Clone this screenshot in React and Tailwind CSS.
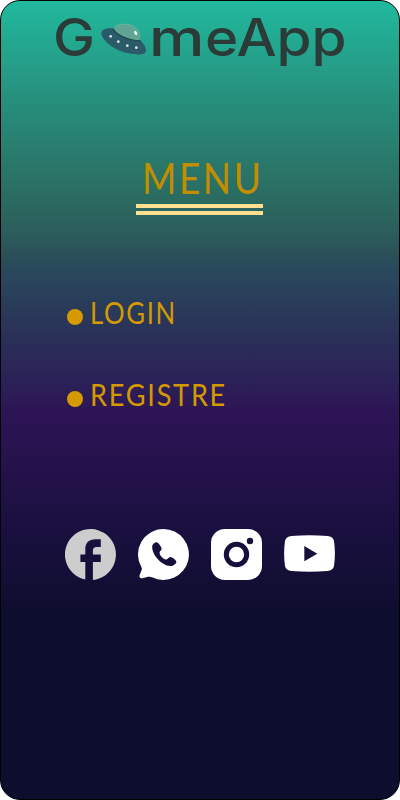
const Ufo = () => (
  <svg className="mt-[22px] ml-[7px] h-8 w-[46px] shrink-0" viewBox="153 66 138 96">
    <path d="M192 82C165 80 153 87 154 98c3 20 36 49 81 59 30 6 52 5 53-8 0-11-8-23-18-32Z" fill="#2b5a69" />
    <path d="M190 84c10 20 47 36 81 35" fill="none" stroke="#1f4b4c" strokeWidth="4" />
    <path d="M191 83c9-13 34-17 54-9 17 6 26 21 25 43-25 1-65-13-79-34Z" fill="#60a593" />
    <path d="M194 78c10-9 32-12 51-4 14 5 23 17 25 32" fill="none" stroke="#8db9a0" strokeWidth="2" />
    <ellipse cx="257" cy="96" rx="4" ry="7" fill="#eefff7" transform="rotate(-25 257 96)" />
    <g fill="#dceae7">
      <circle cx="182" cy="106" r="4" />
      <circle cx="205" cy="122" r="4" />
      <circle cx="232" cy="134" r="4" />
      <circle cx="259" cy="140" r="4" />
    </g>
  </svg>
);

const Facebook = () => (
  <svg className="size-[51px]" viewBox="0 0 51 51">
    <path fill="#cdcdcd" d="M20.300 50.500A25.500 25.500 0 1 1 27.900 50.900V33H35.800V25.400H27.900V21.500Q27.900 17.900 31.500 17.900H35.800V10.200H30.500C24 10.200 20.300 13.800 20.300 20V25.400H15.400V33H20.300Z" />
  </svg>
);

const Whatsapp = () => (
  <svg className="size-[51px]" viewBox="0 0 51 51">
    <path fill="#fff" d="M25.500 0A25.500 25.500 0 1 1 14 48.300Q12 47.300 10 47.800L4.500 49.200C2.200 49.500.9 48 1.700 46L3.600 41Q4.200 39.500 3.500 38.400A25.500 25.500 0 0 1 25.500 0Z" />
    <path fill="#150f3b" d="M14.300 16.500c1-2 3.300-3.800 5-3 1.500.8 4 4.300 4.300 6 .3 1.800-2.300 2.700-2.100 4.500.4 2.700 3 5.400 6 6.500 1.900.7 3-2.800 5-2.500 2 .2 5.500 3 5.800 4.700.3 1.800-3.500 4.600-6 4.400C23.500 36.500 13 25.300 14.300 16.500Z" />
  </svg>
);

const Instagram = () => (
  <svg className="size-[51px]" viewBox="0 0 51 51">
    <rect width="51" height="51" rx="14" fill="#fff" />
    <circle cx="25.500" cy="25.500" r="10.200" fill="none" stroke="#150f3b" strokeWidth="5" />
    <circle cx="39" cy="12" r="3.200" fill="#150f3b" />
  </svg>
);

const Youtube = () => (
  <svg className="size-[51px]" viewBox="0 0 51 51">
    <path fill="#fff" d="M7.500 7Q25.500 5.500 43.500 7Q49 7.300 50 12Q51.800 24.500 50 37Q49 41.700 43.500 42Q25.500 43.500 7.500 42Q2 41.700 1 37Q-.8 24.500 1 12Q2 7.300 7.500 7Z" />
    <path fill="#150f3b" d="M20.300 17v15.300l13-7.600Z" />
  </svg>
);

export default function App() {
  return (
    <main className="h-[800px] w-[400px] overflow-hidden rounded-[20px] border border-black bg-[linear-gradient(180deg,#21b99e_0px,#278f7c_100px,#2b6a60_200px,#2b5e5c_230px,#2b5058_254px,#294a5c_266px,#2a3258_330px,#2b2558_370px,#2d1455_412px,#291350_440px,#1b1041_520px,#150f39_560px,#0d0d2d_615px,#0d0d2d_800px)] font-['Lato',sans-serif]">
      <header className="flex h-[76px] pl-[52px] font-['Inter',sans-serif] text-[52px] leading-[73px] font-medium text-[#2b3b38]">
        <span className="w-[41px] origin-left scale-x-[1.08] whitespace-nowrap">G</span>
        <Ufo />
        <span className="ml-[2px] flex whitespace-nowrap">
          <span className="w-[56px] origin-left scale-x-[1.2]">m</span>
          <span className="origin-left scale-x-[1.09]">eApp</span>
        </span>
      </header>

      <section className="mt-[76px] ml-[135px] w-[127px]">
        <h1 className="h-[51px] origin-left scale-x-[0.86] pl-[7px] text-[43px] leading-[50px] tracking-[3px] whitespace-nowrap text-[#c28e00]">MENU</h1>
        <div className="h-[11px] border-y-4 border-[#ffe090]" />
      </section>

      <nav className="mt-[78px] ml-[66px] text-[31px] leading-[38px] text-[#d49a00]">
        <div className="flex h-[40px] items-center">
          <i className="mt-[7px] size-4 rounded-full bg-[#d49a00]" />
          <span className="mb-[2px] ml-[7px] origin-left scale-x-[0.83] tracking-[2px] whitespace-nowrap">LOGIN</span>
        </div>
        <div className="mt-[42px] flex h-[40px] items-center">
          <i className="mt-[7px] size-4 rounded-full bg-[#d49a00]" />
          <span className="mb-[2px] ml-[7px] origin-left scale-x-[0.875] tracking-[2px] whitespace-nowrap">REGISTRE</span>
        </div>
      </nav>

      <footer className="mt-[114px] ml-[64px] flex gap-[22px]">
        <Facebook />
        <Whatsapp />
        <Instagram />
        <Youtube />
      </footer>
    </main>
  );
}
